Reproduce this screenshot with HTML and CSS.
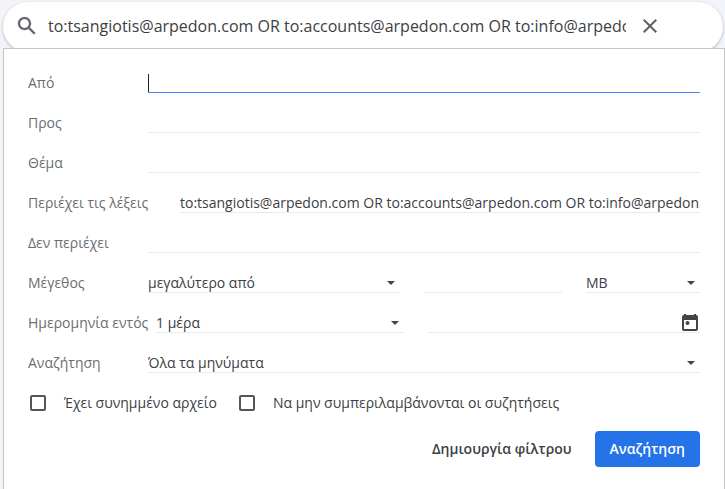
FILE: index.html
```
<!DOCTYPE html>
<html lang="el">
<head>
    <meta charset="UTF-8">
    <meta name="viewport" content="width=device-width, initial-scale=1.0">
    <title>Αναζήτηση</title>
    <link rel="stylesheet" href="styles.css">
</head>
<body>
    <!-- Search bar -->
    <div class="search-bar">
        <button type="button" class="icon-button" aria-label="Αναζήτηση">
            <svg width="24" height="24" viewBox="0 0 24 24" fill="#5f6368"><path d="M20.49 19l-5.73-5.73C15.53 12.2 16 10.91 16 9.5 16 5.91 13.09 3 9.5 3S3 5.91 3 9.5 5.91 16 9.5 16c1.41 0 2.7-.47 3.77-1.24L19 20.49 20.49 19zM5 9.5C5 7.01 7.01 5 9.5 5S14 7.01 14 9.5 11.99 14 9.5 14 5 11.99 5 9.5z" stroke="#5f6368" stroke-width=".2"/></svg>
        </button>
        <input type="text" class="search-input" aria-label="Αναζήτηση στην αλληλογραφία" value="to:tsangiotis@arpedon.com OR to:accounts@arpedon.com OR to:info@arpedon.com">
        <button type="button" class="icon-button" aria-label="Διαγραφή">
            <svg width="24" height="24" viewBox="0 0 24 24" fill="#5f6368"><path d="M19 6.41L17.59 5 12 10.59 6.41 5 5 6.41 10.59 12 5 17.59 6.41 19 12 13.41 17.59 19 19 17.59 13.41 12z"/></svg>
        </button>
    </div>

    <!-- Filter options -->
    <form class="panel">
        <div class="row">
            <label for="from">Από</label>
            <input type="text" id="from" class="field active">
        </div>
        <div class="row">
            <label for="to">Προς</label>
            <input type="text" id="to" class="field">
        </div>
        <div class="row">
            <label for="subject">Θέμα</label>
            <input type="text" id="subject" class="field">
        </div>
        <div class="row wide-label">
            <label for="has">Περιέχει τις λέξεις</label>
            <input type="text" id="has" class="field" value="to:tsangiotis@arpedon.com OR to:accounts@arpedon.com OR to:info@arpedon.com">
        </div>
        <div class="row">
            <label for="hasNot">Δεν περιέχει</label>
            <input type="text" id="hasNot" class="field">
        </div>
        <div class="row">
            <label for="size">Μέγεθος</label>
            <div class="size-fields">
                <div class="select">
                    <select id="size" class="field"><option>μεγαλύτερο από</option></select>
                </div>
                <input type="text" class="field" aria-label="Τιμή μεγέθους">
                <div class="select">
                    <select class="field" aria-label="Μονάδα μεγέθους"><option>MB</option></select>
                </div>
            </div>
        </div>
        <div class="row date-row">
            <label for="within">Ημερομηνία εντός</label>
            <div class="date-fields">
                <div class="select">
                    <select id="within" class="field"><option>1 μέρα</option></select>
                </div>
                <div class="date">
                    <input type="text" class="field" aria-label="Ημερομηνία">
                    <svg width="18" height="20" viewBox="0 0 18 20"><path fill="#444" fill-rule="evenodd" d="M3 1h2v1h8V1h2v1a2 2 0 0 1 2 2v12a2 2 0 0 1-2 2H3a2 2 0 0 1-2-2V4a2 2 0 0 1 2-2zM3 7v9h12V7z"/><circle cx="6.500" cy="10" r="2" fill="#444"/></svg>
                </div>
            </div>
        </div>
        <div class="row">
            <label for="where">Αναζήτηση</label>
            <div class="select">
                <select id="where" class="field"><option>Όλα τα μηνύματα</option></select>
            </div>
        </div>
        <div class="checks">
            <label><input type="checkbox">Έχει συνημμένο αρχείο</label>
            <label><input type="checkbox">Να μην συμπεριλαμβάνονται οι συζητήσεις</label>
        </div>
        <div class="actions">
            <button type="button" class="button">Δημιουργία φίλτρου</button>
            <button type="submit" class="button primary">Αναζήτηση</button>
        </div>
    </form>
</body>
</html>
```

FILE: styles.css
```
* {
    box-sizing: border-box;
}

body {
    margin: 0;
    padding: 2px 0 0 3px;
    background-color: #f3f4fa;
    font-family: "Open Sans", sans-serif;
    font-size: 14px;
    line-height: 20px;
    color: #3c4043;
    overflow: hidden;
}

input, select, button {
    font: inherit;
    color: inherit;
    margin: 0;
    padding: 0;
    border: none;
    outline: none;
    background: none;
}

.search-bar {
    display: flex;
    align-items: center;
    height: 50px;
    margin: 0 2px -4px 0;
    padding: 0 61px 2px 12px;
    background-color: #fff;
    border-radius: 25px;
    box-shadow: 0 1px 3px rgba(60, 64, 67, 0.35);
}

.search-input {
    flex: 1;
    min-width: 0;
    margin: 0 12px 0 9px;
    font-size: 16px;
    line-height: 24px;
}

.icon-button {
    display: flex;
    cursor: pointer;
}

.panel {
    position: relative;
    padding: 24px 24px 22px;
    background-color: #fff;
    border: 1px solid #c4c6c8;
    border-bottom: none;
}

.row {
    display: grid;
    grid-template-columns: 120px 1fr;
    margin-bottom: 20px;
}

.row label {
    color: #6a6e72;
    white-space: nowrap;
}

.wide-label {
    grid-template-columns: 152px 1fr;
}

.date-row {
    grid-template-columns: 128px 1fr;
}

.field {
    display: block;
    width: 100%;
    min-width: 0;
    height: 20px;
    border-bottom: 1px solid #e8eaed;
    border-radius: 0;
    appearance: none;
}

.active {
    border-color: #4285f4;
    /* text cursor */
    background: linear-gradient(#222, #222) left bottom / 1px 18px no-repeat;
}

.select {
    position: relative;
}

.select::after {
    content: "";
    position: absolute;
    right: 5px;
    top: 8px;
    border: 4px solid transparent;
    border-top-color: #444;
    border-bottom: none;
    pointer-events: none;
}

.size-fields {
    display: grid;
    grid-template-columns: 252fr 138fr 114fr;
    gap: 24px;
}

.date-fields {
    display: grid;
    grid-template-columns: 248fr 272fr;
    gap: 24px;
}

.date {
    position: relative;
}

.date svg {
    position: absolute;
    right: 1px;
    top: 0;
}

.checks {
    display: flex;
    gap: 20px;
}

.checks label {
    display: flex;
    align-items: center;
}

.checks input {
    width: 16px;
    height: 16px;
    margin: 0 18px 0 2px;
    border: 2px solid #555;
    border-radius: 2px;
    appearance: none;
}

.actions {
    display: flex;
    justify-content: flex-end;
    gap: 8px;
    margin-top: 18px;
}

.button {
    height: 36px;
    padding: 0 15px;
    border-radius: 4px;
    font-weight: 600;
    cursor: pointer;
}

.primary {
    background-color: #2473e8;
    color: #fff;
}
```
